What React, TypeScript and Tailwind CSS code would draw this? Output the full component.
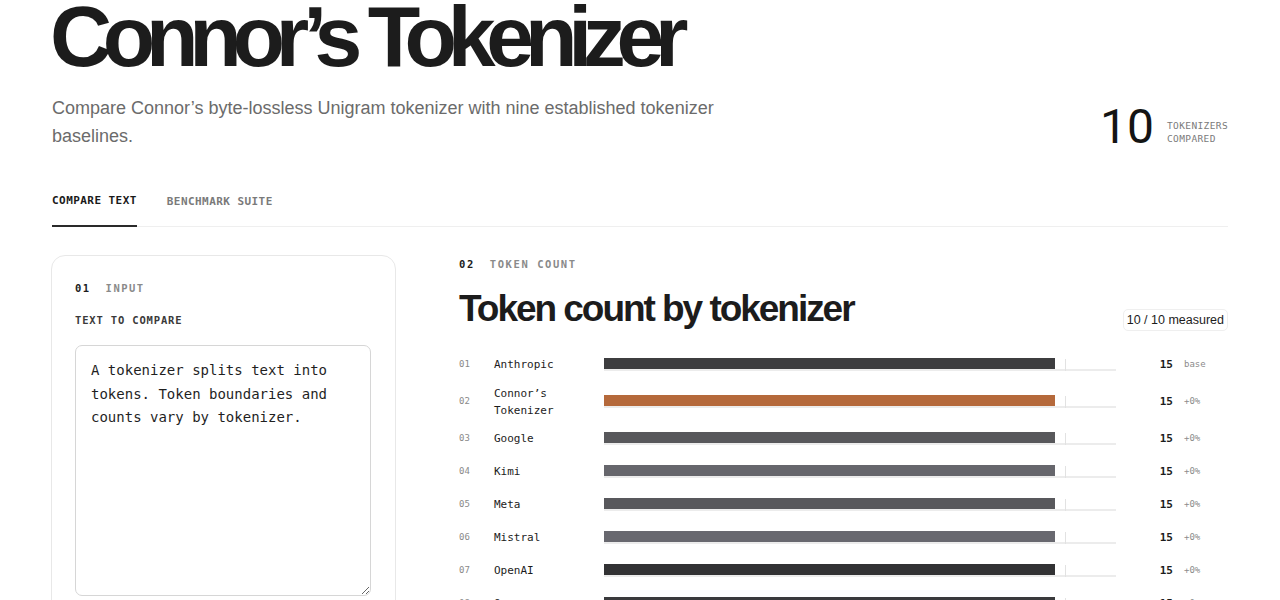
import React from "react";

const sans = "font-['Liberation_Sans',Arial,sans-serif]";
const mono = "font-['DejaVu_Sans_Mono',monospace]";

interface Row {
  name: string;
  count: number;
  delta: string;
  color: string;
}

const rows: Row[] = [
  { name: "Anthropic", count: 15, delta: "base", color: "bg-[#3d3d3f]" },
  { name: "Connor’s Tokenizer", count: 15, delta: "+0%", color: "bg-[#b5693b]" },
  { name: "Google", count: 15, delta: "+0%", color: "bg-[#58585b]" },
  { name: "Kimi", count: 15, delta: "+0%", color: "bg-[#66666c]" },
  { name: "Meta", count: 15, delta: "+0%", color: "bg-[#58585c]" },
  { name: "Mistral", count: 15, delta: "+0%", color: "bg-[#68686f]" },
  { name: "OpenAI", count: 15, delta: "+0%", color: "bg-[#323234]" },
  { name: "Qwen", count: 15, delta: "+0%", color: "bg-[#3a3a3c]" },
];

function BarRow({ row, index }: { row: Row; index: number }) {
  return (
    <div className="grid grid-cols-[35px_110px_512px_57px_11px_44px] items-center min-h-[33px] py-[3.5px]">
      <span className={`${mono} text-[9px] text-[#8a8a8a]`}>
        {String(index + 1).padStart(2, "0")}
      </span>
      <span className={`${mono} text-[11px] leading-[17px] text-[#1c1c1c] pr-4`}>
        {row.name}
      </span>
      <div className="relative h-[13px]">
        <div className={`h-[11px] w-[88%] ${row.color}`} />
        <div className="absolute left-0 right-0 bottom-0 h-[2px] bg-[#ececec]" />
        <div className="absolute left-[90%] top-[1px] bottom-0 w-px bg-[#e2e2e2]" />
      </div>
      <span className={`${mono} text-[11px] font-bold text-right text-[#1c1c1c]`}>
        {row.count}
      </span>
      <span />
      <span className={`${mono} text-[9px] text-[#8c8c8c]`}>{row.delta}</span>
    </div>
  );
}

export default function App() {
  return (
    <div className={`min-h-screen bg-white ${sans} text-[#1c1c1c]`}>
      <div className="mx-auto w-[1176px]">
        <header className="flex items-start justify-between">
          <div>
            <h1 className="-mt-[7px] -ml-[2px] text-[86px] font-bold leading-none tracking-[-0.108em]">
              Connor’s Tokenizer
            </h1>
            <p className="mt-[15px] w-[680px] text-[18px] leading-[28px] text-[#6b6b6b]">
              Compare Connor’s byte-lossless Unigram tokenizer with nine established tokenizer
              baselines.
            </p>
          </div>
          <div className="mt-[103px] flex items-center gap-[13px]">
            <span className="font-['Roboto',sans-serif] text-[48px] leading-none font-normal text-[#141414]">
              10
            </span>
            <span
              className={`${mono} pt-[9px] text-[9.5px] leading-[13px] tracking-[0.04em] text-[#7a7a7a]`}
            >
              TOKENIZERS
              <br />
              COMPARED
            </span>
          </div>
        </header>

        <nav className="mt-[42px] flex gap-[30px] border-b border-[#efefef]">
          <button
            className={`${mono} text-[11px] font-bold tracking-[0.04em] text-[#1a1a1a] pb-[15px] border-b-2 border-[#2a2a2a] -mb-px`}
          >
            COMPARE TEXT
          </button>
          <button
            className={`${mono} text-[11px] font-bold tracking-[0.04em] text-[#7a7a7a] pb-[15px]`}
          >
            BENCHMARK SUITE
          </button>
        </nav>

        <main className="mt-[28px] flex gap-[63px] items-start">
          <section className="-ml-px w-[345px] shrink-0 rounded-[14px] border border-[#e8e8e8] px-[23px] pt-[25px] pb-6">
            <div className={`${mono} flex gap-[15px] text-[10.5px] font-bold tracking-[0.14em]`}>
              <span className="text-[#1c1c1c]">01</span>
              <span className="text-[#8a8a8a]">INPUT</span>
            </div>
            <label
              className={`${mono} block mt-[17px] text-[10.5px] font-bold tracking-[0.08em] text-[#3a3a3a]`}
            >
              TEXT TO COMPARE
            </label>
            <textarea
              className={`${mono} mt-[16px] block w-[296px] h-[251px] resize-y rounded-[7px] border border-[#d6d6d6] px-[15px] py-[13px] text-[14px] leading-[23.5px] text-[#1f1f1f] outline-none`}
              defaultValue="A tokenizer splits text into tokens. Token boundaries and counts vary by tokenizer."
            />
          </section>

          <section className="flex-1 pt-[2px]">
            <div className={`${mono} flex gap-[15px] text-[10.5px] font-bold tracking-[0.15em]`}>
              <span className="text-[#1c1c1c]">02</span>
              <span className="text-[#8a8a8a]">TOKEN COUNT</span>
            </div>
            <div className="mt-[18px] flex items-end justify-between">
              <h2 className="text-[37px] font-bold leading-none tracking-[-0.055em]">
                Token count by tokenizer
              </h2>
              <span className="rounded-[5px] border border-[#efefef] px-[3px] py-px text-[12.5px] text-[#1c1c1c] mb-[-4px]">
                10 / 10 measured
              </span>
            </div>
            <div className="mt-[21px]">
              {rows.map((row, i) => (
                <BarRow key={row.name} row={row} index={i} />
              ))}
            </div>
          </section>
        </main>
      </div>
    </div>
  );
}
